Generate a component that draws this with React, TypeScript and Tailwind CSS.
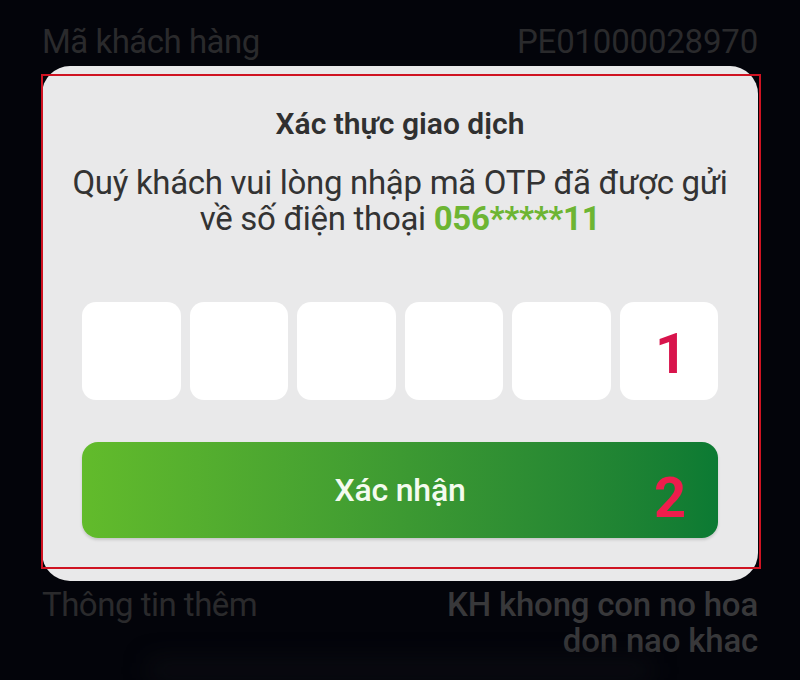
export default function App() {
  const cells = ["", "", "", "", "", ""];

  return (
    <div className="relative flex h-[680px] w-[800px] flex-col overflow-hidden bg-[#03040a] font-['Roboto',sans-serif]">
      {/* background row behind the dialog */}
      <div className="flex items-center justify-between px-[42px] pt-[22px] text-[33px] leading-[40px] tracking-[-0.5px] text-[#2a2a2c]">
        <span>Mã khách hàng</span>
        <span className="tracking-[-0.2px]">PE01000028970</span>
      </div>

      <div className="relative mx-[42px] mt-[4px] rounded-[28px] bg-[#e9e9ea] px-[40px] pb-[43px] pt-[40px]">
        <h2 className="text-center text-[30px] font-semibold leading-[36px] text-[#303030]">
          Xác thực giao dịch
        </h2>
        <p className="-mx-[24px] mt-[23px] whitespace-nowrap text-center text-[33px] leading-[36px] tracking-[-0.3px] text-[#333333]">
          Quý khách vui lòng nhập mã OTP đã được gửi
          <br />
          về số điện thoại{" "}
          <span className="font-bold text-[#6db533]">056*****11</span>
        </p>

        <div className="mt-[65px] grid grid-cols-6 gap-[9px]">
          {cells.map((c, i) => (
            <div
              key={i}
              className="flex h-[98px] items-center justify-center rounded-[14px] bg-white"
            >
              {c}
            </div>
          ))}
        </div>

        <button className="mt-[42px] flex h-[96px] w-full items-center justify-center rounded-[16px] bg-gradient-to-r from-[#62bb2b] to-[#0b7a33] text-[32px] font-medium tracking-[-0.2px] text-[#f4fbef] shadow-[0_2px_3px_rgba(0,0,0,0.15)]">
          Xác nhận
        </button>

        {/* annotation overlays */}
        <div className="pointer-events-none absolute bottom-[12px] left-[-1px] right-[-3px] top-[8px] border-2 border-[#cf1322]" />
        <span className="absolute left-[613px] top-[260px] text-[56px] font-bold leading-none text-[#d8144c]">
          1
        </span>
        <span className="absolute left-[612px] top-[404px] text-[56px] font-bold leading-none text-[#ee1d4c]">
          2
        </span>
      </div>

      <div className="flex justify-between px-[42px] pt-[6px] text-[33px] leading-[36px] tracking-[-0.5px] text-[#2a2a2c]">
        <span>Thông tin thêm</span>
        <span className="text-right font-medium tracking-[-0.2px] text-[#38383a]">
          KH khong con no hoa
          <br />
          don nao khac
        </span>
      </div>
      <div className="mx-[150px] mt-[2px] h-[30px] rounded bg-[#0c0d12] blur-md" />
    </div>
  );
}
